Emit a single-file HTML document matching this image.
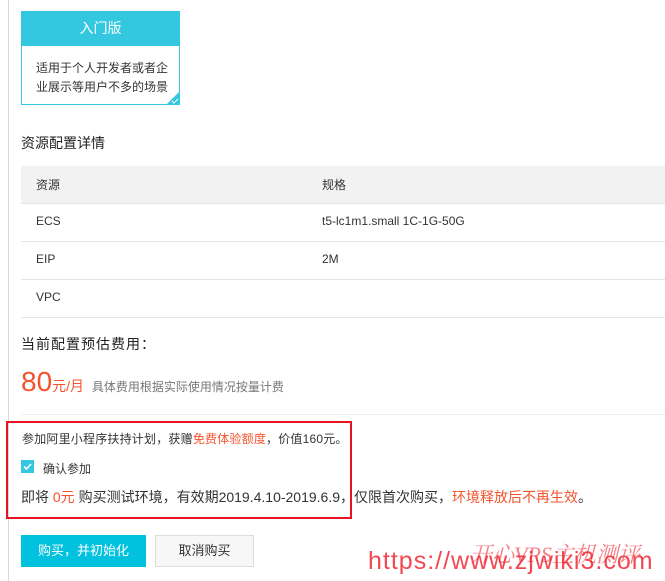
<!DOCTYPE html>
<html><head><meta charset="utf-8"><style>
body{margin:0;width:665px;height:581px;background:#fff;position:relative;overflow:hidden;font-family:"Liberation Sans","Noto Sans CJK SC",sans-serif;color:#333}
.a{position:absolute;white-space:nowrap}
</style></head><body>
<div class="a" style="left:8px;top:0;width:1px;height:581px;background:#d9d9d9"></div>
<div class="a" style="left:21px;top:11px;width:157px;height:92px;border:1px solid #33c8e0;background:#fff"></div>
<div class="a" style="left:21px;top:11px;width:159px;height:35px;background:#33c8e0;color:#fff;font-size:14px;text-align:center;line-height:35px">入门版</div>
<div class="a" style="left:36px;top:59px;font-size:12px;line-height:19px;color:#333">适用于个人开发者或者企<br>业展示等用户不多的场景</div>
<svg class="a" style="left:166px;top:91px" width="14" height="14"><polygon points="14,0 14,14 0,14" fill="#33c8e0"/><path d="M6 10 L8 12 L12 8" stroke="#fff" fill="none" stroke-width="1"/></svg>
<div class="a" style="left:21px;top:133px;font-size:14px;color:#222">资源配置详情</div>
<div class="a" style="left:21px;top:166px;width:644px;height:37px;background:#f2f2f2;border-bottom:1px solid #e5e5e5"></div>
<div class="a" style="left:21px;top:241px;width:644px;height:1px;background:#e5e5e5"></div>
<div class="a" style="left:21px;top:279px;width:644px;height:1px;background:#e5e5e5"></div>
<div class="a" style="left:21px;top:317px;width:644px;height:1px;background:#e5e5e5"></div>
<div class="a" style="left:36px;top:176px;font-size:12px">资源</div>
<div class="a" style="left:322px;top:176px;font-size:12px">规格</div>
<div class="a" style="left:36px;top:214px;font-size:12px">ECS</div>
<div class="a" style="left:322px;top:214px;font-size:12px">t5-lc1m1.small 1C-1G-50G</div>
<div class="a" style="left:36px;top:252px;font-size:12px">EIP</div>
<div class="a" style="left:322px;top:252px;font-size:12px">2M</div>
<div class="a" style="left:36px;top:290px;font-size:12px">VPC</div>
<div class="a" style="left:21px;top:334px;font-size:14px;color:#222;letter-spacing:1px">当前配置预估费用：</div>
<div class="a" style="left:21px;top:366px;font-size:28px;color:#f5532d">80<span style="font-size:14px">元/月</span> <span style="font-size:12px;color:#777">具体费用根据实际使用情况按量计费</span></div>
<div class="a" style="left:21px;top:414px;width:644px;height:1px;background:#eee"></div>
<div class="a" style="left:6px;top:421px;width:342px;height:94px;border:2px solid #e8131e"></div>
<div class="a" style="left:22px;top:430px;font-size:12px;letter-spacing:0.2px">参加阿里小程序扶持计划，获赠<span style="color:#f5532d">免费体验额度</span>，价值160元。</div>
<svg class="a" style="left:21px;top:460px" width="13" height="13"><rect width="13" height="13" fill="#33c8e0"/><path d="M3 6.5 L5.5 9 L10 4" stroke="#fff" stroke-width="1.6" fill="none"/></svg>
<div class="a" style="left:43px;top:460px;font-size:12px">确认参加</div>
<div class="a" style="left:21px;top:487px;font-size:14px">即将 <span style="color:#f5532d">0元</span> 购买测试环境，有效期2019.4.10-2019.6.9，仅限首次购买，<span style="color:#f5532d">环境释放后不再生效</span>。</div>
<div class="a" style="left:21px;top:535px;width:125px;height:32px;background:#00c1de;color:#fff;font-size:13px;text-align:center;line-height:32px">购买，并初始化</div>
<div class="a" style="left:155px;top:535px;width:97px;height:30px;border:1px solid #ddd;background:#f7f7f7;font-size:13px;text-align:center;line-height:30px">取消购买</div>
<div class="a" style="left:368px;top:547px;font-size:25px;letter-spacing:1px;color:rgba(240,40,50,0.85)">https://www.zjwiki3.com</div>
<div class="a" style="left:470px;top:538px;font-size:22px;color:rgba(240,40,50,0.6);font-family:'Liberation Serif','Noto Serif CJK SC',serif;font-style:italic">开心VPS主机测评</div>
</body></html>
